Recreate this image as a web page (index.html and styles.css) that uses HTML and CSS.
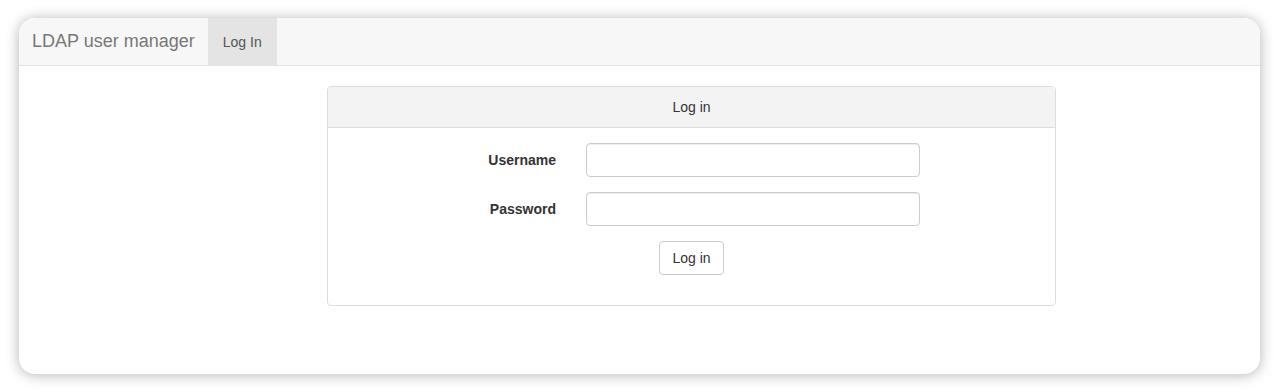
FILE: index.html
```html
<!DOCTYPE html>
<html>
<head>
<meta charset="utf-8">
<link rel="stylesheet" href="styles.css">
</head>
<body>
<div class="window">
  <nav class="navbar">
    <span class="brand">LDAP user manager</span>
    <span class="nav-item active">Log In</span>
  </nav>
  <div class="content">
    <div class="panel">
      <div class="panel-heading">Log in</div>
      <form class="panel-body">
        <div class="form-group">
          <label class="label">Username</label>
          <input class="input" type="text">
        </div>
        <div class="form-group">
          <label class="label">Password</label>
          <input class="input" type="password">
        </div>
        <div class="form-group actions">
          <button class="btn" type="button">Log in</button>
        </div>
      </form>
    </div>
  </div>
</div>
</body>
</html>
```
FILE: styles.css
```css
html, body {
  margin: 0;
  padding: 0;
  background: #ffffff;
}
body {
  font-family: "Liberation Sans", Arial, Helvetica, sans-serif;
  font-size: 14px;
  color: #333;
  padding: 18px 19px 18px 19px;
  min-height: 392px;
  box-sizing: border-box;
}
.window {
  height: 356px;
  border-radius: 16px;
  background: #fff;
  box-shadow: 0 1px 14px rgba(0, 0, 0, 0.3);
  overflow: hidden;
}
.navbar {
  display: flex;
  align-items: stretch;
  height: 47px;
  background: #f7f7f7;
  border-bottom: 1px solid #e4e4e4;
}
.brand {
  display: flex;
  align-items: center;
  padding: 0 13px 0 13px;
  font-size: 18px;
  color: #777;
}
.nav-item {
  display: flex;
  align-items: center;
  padding: 0 15px;
  color: #555;
  font-size: 14px;
}
.nav-item.active {
  background: #e4e4e4;
}
.content {
  padding: 20px 0 0 308px;
}
.panel {
  width: 727px;
  border: 1px solid #ddd;
  border-radius: 4px;
}
.panel-heading {
  height: 40px;
  line-height: 40px;
  text-align: center;
  background: #f3f3f3;
  border-bottom: 1px solid #ddd;
  border-radius: 3px 3px 0 0;
}
.panel-body {
  margin: 0;
  padding: 15px 0 15px 0;
}
.form-group {
  display: flex;
  align-items: center;
  margin-bottom: 15px;
}
.label {
  width: 228px;
  text-align: right;
  font-weight: bold;
  padding-right: 30px;
}
.input {
  box-sizing: border-box;
  width: 334px;
  height: 34px;
  margin: 0;
  border: 1px solid #ccc;
  border-radius: 4px;
  box-shadow: inset 0 1px 1px rgba(0, 0, 0, 0.075);
  font: inherit;
  padding: 6px 12px;
}
.actions {
  justify-content: center;
}
.btn {
  box-sizing: border-box;
  height: 34px;
  padding: 6px 12px;
  border: 1px solid #ccc;
  border-radius: 4px;
  background: #fff;
  color: #333;
  font: inherit;
  font-size: 14px;
}
```
